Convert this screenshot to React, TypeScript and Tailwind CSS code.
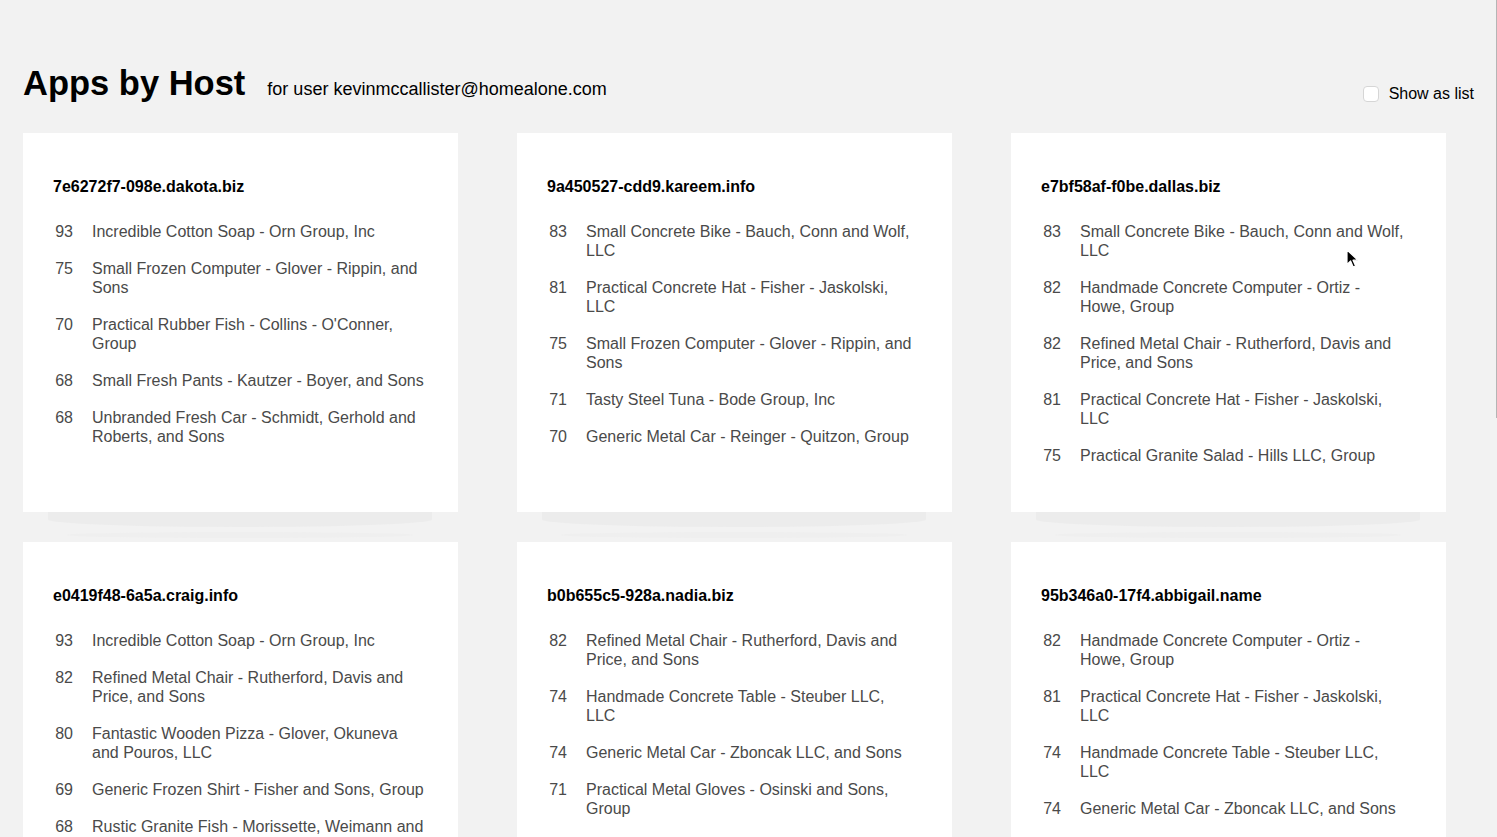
import { useState } from 'react';

type App = { score: number; name: string };
type Host = { host: string; apps: App[] };

// line breaks follow the reference layout
const hosts: Host[] = [
    {
        host: '7e6272f7-098e.dakota.biz',
        apps: [
            { score: 93, name: 'Incredible Cotton Soap - Orn Group, Inc' },
            { score: 75, name: 'Small Frozen Computer - Glover - Rippin, and\nSons' },
            { score: 70, name: "Practical Rubber Fish - Collins - O'Conner,\nGroup" },
            { score: 68, name: 'Small Fresh Pants - Kautzer - Boyer, and Sons' },
            { score: 68, name: 'Unbranded Fresh Car - Schmidt, Gerhold and\nRoberts, and Sons' },
        ],
    },
    {
        host: '9a450527-cdd9.kareem.info',
        apps: [
            { score: 83, name: 'Small Concrete Bike - Bauch, Conn and Wolf,\nLLC' },
            { score: 81, name: 'Practical Concrete Hat - Fisher - Jaskolski,\nLLC' },
            { score: 75, name: 'Small Frozen Computer - Glover - Rippin, and\nSons' },
            { score: 71, name: 'Tasty Steel Tuna - Bode Group, Inc' },
            { score: 70, name: 'Generic Metal Car - Reinger - Quitzon, Group' },
        ],
    },
    {
        host: 'e7bf58af-f0be.dallas.biz',
        apps: [
            { score: 83, name: 'Small Concrete Bike - Bauch, Conn and Wolf,\nLLC' },
            { score: 82, name: 'Handmade Concrete Computer - Ortiz -\nHowe, Group' },
            { score: 82, name: 'Refined Metal Chair - Rutherford, Davis and\nPrice, and Sons' },
            { score: 81, name: 'Practical Concrete Hat - Fisher - Jaskolski,\nLLC' },
            { score: 75, name: 'Practical Granite Salad - Hills LLC, Group' },
        ],
    },
    {
        host: 'e0419f48-6a5a.craig.info',
        apps: [
            { score: 93, name: 'Incredible Cotton Soap - Orn Group, Inc' },
            { score: 82, name: 'Refined Metal Chair - Rutherford, Davis and\nPrice, and Sons' },
            { score: 80, name: 'Fantastic Wooden Pizza - Glover, Okuneva\nand Pouros, LLC' },
            { score: 69, name: 'Generic Frozen Shirt - Fisher and Sons, Group' },
            { score: 68, name: 'Rustic Granite Fish - Morissette, Weimann and\nSons' },
        ],
    },
    {
        host: 'b0b655c5-928a.nadia.biz',
        apps: [
            { score: 82, name: 'Refined Metal Chair - Rutherford, Davis and\nPrice, and Sons' },
            { score: 74, name: 'Handmade Concrete Table - Steuber LLC,\nLLC' },
            { score: 74, name: 'Generic Metal Car - Zboncak LLC, and Sons' },
            { score: 71, name: 'Practical Metal Gloves - Osinski and Sons,\nGroup' },
            { score: 70, name: 'Generic Metal Car - Reinger - Quitzon, Group' },
        ],
    },
    {
        host: '95b346a0-17f4.abbigail.name',
        apps: [
            { score: 82, name: 'Handmade Concrete Computer - Ortiz -\nHowe, Group' },
            { score: 81, name: 'Practical Concrete Hat - Fisher - Jaskolski,\nLLC' },
            { score: 74, name: 'Handmade Concrete Table - Steuber LLC,\nLLC' },
            { score: 74, name: 'Generic Metal Car - Zboncak LLC, and Sons' },
            { score: 71, name: 'Tasty Steel Tuna - Bode Group, Inc' },
        ],
    },
];

const HostCard = ({ host }: { host: Host }) => (
    <div className="relative bg-white pt-[44px] pl-[30px] pr-[20px] pb-[29px]">
        <h2 className="text-[16px] leading-[19px] font-bold text-black mb-[26px]">{host.host}</h2>
        <ul>
            {host.apps.map((app, idx) => (
                <li key={idx} className="flex text-[16px] leading-[19px] text-[#4a4a4a] mb-[18px]">
                    <span className="w-[20px] shrink-0 text-right">{app.score}</span>
                    <span className="ml-[19px] flex-1 whitespace-pre-line">{app.name}</span>
                </li>
            ))}
        </ul>
        {/* stacked paper look under each card */}
        <div className="absolute top-full left-[25px] right-[26px] h-[15px] rounded-b-[50%] bg-[#ececec]" />
        <div className="absolute top-[calc(100%+20px)] left-[43px] right-[44px] h-[6px] rounded-[50%] bg-[#efefef]" />
    </div>
);

export default function App() {
    const [asList, setAsList] = useState(false);

    return (
        <div className="relative h-[837px] overflow-hidden bg-[#f2f2f2] font-['Liberation_Sans',Arial,sans-serif]">
            <div className="px-[23px] pt-[66px]">
                {/* ---------------- Header ---------------- */}
                <div className="flex justify-between items-start mb-[30px]">
                    <div className="flex items-baseline gap-[22px]">
                        <h1 className="text-[34.5px] leading-[35px] font-bold text-black">Apps by Host</h1>
                        <span className="text-[18px] text-black">for user kevinmccallister@homealone.com</span>
                    </div>
                    <label className="flex items-center gap-[10px] mt-[18px] text-[16px] leading-[19px] text-black">
                        <input
                            type="checkbox"
                            checked={asList}
                            onChange={(e) => setAsList(e.target.checked)}
                            className="appearance-none w-[16px] h-[16px] rounded-[4px] border border-[#d6d6d6] bg-white"
                        />
                        Show as list
                    </label>
                </div>

                {/* ---------------- Cards ---------------- */}
                <div className="grid grid-cols-[repeat(3,435px)] gap-x-[59px] gap-y-[30px]">
                    {hosts.map((h) => (
                        <HostCard key={h.host} host={h} />
                    ))}
                </div>
            </div>

            {/* window edge */}
            <div className="absolute top-0 right-0 w-px h-[418px] bg-[#b5b5b5]" />

            {/* mouse pointer */}
            <svg className="absolute left-[1346px] top-[249px]" width="14" height="20" viewBox="0 0 14 20">
                <path d="M1 1 L1 15.5 L4.6 12 L7.2 18 L9.6 17 L7 11.2 L12 11.2 Z" fill="#000" stroke="#fff" strokeWidth="1.2" strokeLinejoin="round" />
            </svg>
        </div>
    );
}
